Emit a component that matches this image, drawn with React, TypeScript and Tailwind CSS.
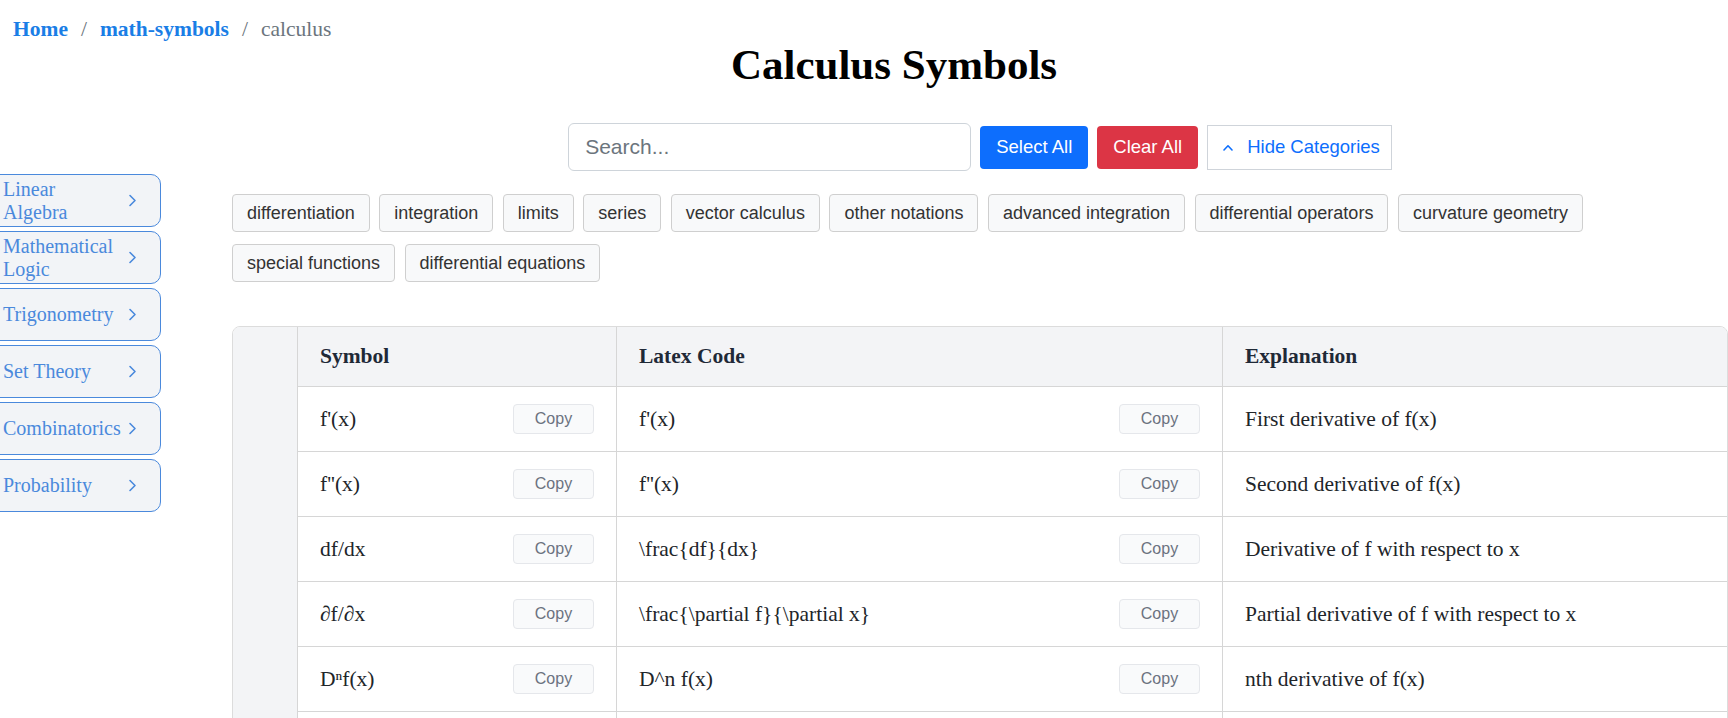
import React from 'react';

const categories = [
  'differentiation',
  'integration',
  'limits',
  'series',
  'vector calculus',
  'other notations',
  'advanced integration',
  'differential operators',
  'curvature geometry',
  'special functions',
  'differential equations',
];

const topics = [
  ['Linear', 'Algebra'],
  ['Mathematical', 'Logic'],
  ['Trigonometry'],
  ['Set Theory'],
  ['Combinatorics'],
  ['Probability'],
];

const rows = [
  { symbol: "f'(x)", latex: "f'(x)", explanation: 'First derivative of f(x)' },
  { symbol: "f''(x)", latex: "f''(x)", explanation: 'Second derivative of f(x)' },
  { symbol: 'df/dx', latex: '\\frac{df}{dx}', explanation: 'Derivative of f with respect to x' },
  { symbol: '∂f/∂x', latex: '\\frac{\\partial f}{\\partial x}', explanation: 'Partial derivative of f with respect to x' },
  { symbol: 'Dⁿf(x)', latex: 'D^n f(x)', explanation: 'nth derivative of f(x)' },
  { symbol: '∫f(x)dx', latex: '\\int f(x)dx', explanation: 'Indefinite integral of f(x)' },
];

const CopyButton = () => (
  <button className="w-[81px] h-[30px] shrink-0 rounded-[4px] border border-[#e5e7eb] bg-[#f9fafb] font-['Liberation_Sans',Arial,sans-serif] text-[16px] text-[#6b7280]">
    Copy
  </button>
);

const Chevron = () => (
  <svg width="9" height="13" viewBox="0 0 9 13" fill="none" className="shrink-0">
    <path d="M2 1.5 L7 6.5 L2 11.5" stroke="#4a89dc" strokeWidth="1.6" strokeLinecap="round" strokeLinejoin="round" />
  </svg>
);

export default function App() {
  return (
    <div className="min-h-screen w-[1728px] overflow-hidden bg-white font-['Liberation_Serif','Times_New_Roman',serif] text-[#212529]">
      {/* breadcrumb */}
      <nav className="pt-[17px] pl-[13px] text-[21.5px] leading-[24px] flex items-center">
        <a className="font-bold text-[#1a7ee6]">Home</a>
        <span className="mx-[13px] text-[#6c757d]">/</span>
        <a className="font-bold text-[#1a7ee6]">math-symbols</a>
        <span className="mx-[13px] text-[#6c757d]">/</span>
        <span className="text-[#6c757d]">calculus</span>
      </nav>

      <h1 className="pl-[60px] text-center text-[43px] leading-[48px] font-bold text-black">Calculus Symbols</h1>

      <div className="flex items-start">
        {/* sidebar */}
        <aside className="-ml-[10px] mt-[85px] flex w-[171px] shrink-0 flex-col gap-[4px]">
          {topics.map((t) => (
            <button
              key={t.join(' ')}
              className="flex h-[53px] w-[171px] items-center rounded-[10px] border border-[#4a89dc] bg-[#f2f4f7] pl-[12px] text-left text-[20px] leading-[23px] text-[#4a89dc]"
            >
              <span className="w-[120px]">
                {t.map((line) => (
                  <span key={line} className="block">
                    {line}
                  </span>
                ))}
              </span>
              <span className="ml-[5px]">
                <Chevron />
              </span>
            </button>
          ))}
        </aside>

        {/* main content */}
        <main className="ml-[71px] flex-1 pt-[34px]">
          <div className="flex h-[48px] items-center justify-center gap-[9px] font-['Liberation_Sans',Arial,sans-serif]">
            <div className="flex h-[48px] w-[403px] items-center rounded-[6px] border border-[#ced4da] bg-white pl-[16px] text-[21px] text-[#6c757d]">
              Search...
            </div>
            <button className="h-[43px] rounded-[4px] bg-[#0d6efd] px-[16px] text-[18.5px] text-white">Select All</button>
            <button className="h-[43px] rounded-[4px] bg-[#dc3545] px-[16px] text-[18.5px] text-white">Clear All</button>
            <button className="flex h-[45px] items-center gap-[14px] border border-[#cfd4da] bg-white pl-[15px] pr-[11px] text-[18.5px] text-[#0d6efd]">
              <svg width="10" height="7" viewBox="0 0 10 7" fill="none">
                <path d="M1 6 L5 1.8 L9 6" stroke="#0d6efd" strokeWidth="1.6" strokeLinecap="round" strokeLinejoin="round" />
              </svg>
              Hide Categories
            </button>
          </div>

          <div className="mt-[23px] flex flex-wrap gap-x-[9.5px] gap-y-[12px] font-['Liberation_Sans',Arial,sans-serif]">
            {categories.map((c) => (
              <span
                key={c}
                className="flex h-[38px] items-center rounded-[4px] border border-[#cfcfcf] bg-[#f8f9fa] px-[14px] text-[18px] text-[#333]"
              >
                {c}
              </span>
            ))}
          </div>

          {/* table */}
          <div className="mt-[44px] flex rounded-t-[8px] border border-[#dcdcdc] overflow-hidden">
            <div className="w-[65px] shrink-0 border-r border-[#d6d6d6] bg-[#f3f4f6]" />
            <div className="flex-1">
              <div className="grid h-[60px] grid-cols-[319px_606px_1fr] border-b border-[#d6d6d6] bg-[#f3f4f6] text-[21.5px] font-bold text-[#1f2937]">
                <div className="flex items-center border-r border-[#d6d6d6] px-[22px]">Symbol</div>
                <div className="flex items-center border-r border-[#d6d6d6] px-[22px]">Latex Code</div>
                <div className="flex items-center px-[22px]">Explanation</div>
              </div>
              {rows.map((r) => (
                <div key={r.latex} className="grid h-[65px] grid-cols-[319px_606px_1fr] border-b border-[#d6d6d6] text-[21.5px] text-[#212529]">
                  <div className="flex items-center justify-between border-r border-[#d6d6d6] px-[22px]">
                    <span>{r.symbol}</span>
                    <CopyButton />
                  </div>
                  <div className="flex items-center justify-between border-r border-[#d6d6d6] px-[22px]">
                    <span>{r.latex}</span>
                    <CopyButton />
                  </div>
                  <div className="flex items-center px-[22px]">{r.explanation}</div>
                </div>
              ))}
            </div>
          </div>
        </main>
      </div>
    </div>
  );
}
